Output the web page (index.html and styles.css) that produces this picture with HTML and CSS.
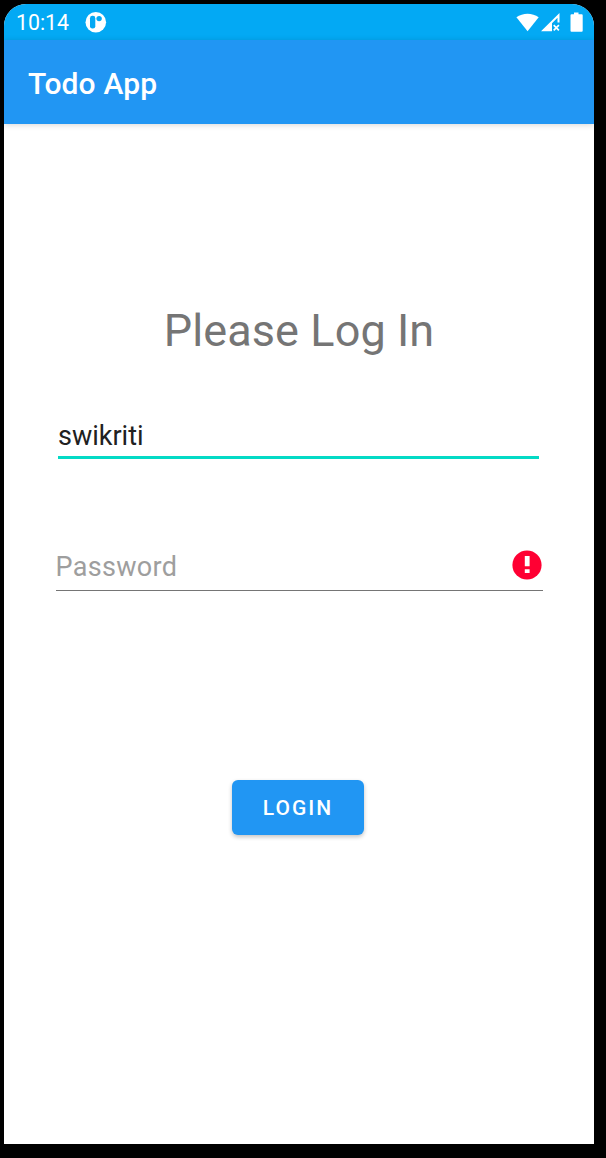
FILE: index.html
```html
<!DOCTYPE html>
<html lang="en">
<head>
<meta charset="utf-8">
<title>Todo App</title>
<link rel="stylesheet" href="styles.css">
</head>
<body>
<div class="screen">
  <div class="status-bar">
    <span class="clock">10:14</span>
    <svg class="notification" width="22" height="22" viewBox="0 0 22 22">
      <circle cx="10.800" cy="11.200" r="10.300" fill="#fff"/>
      <rect x="5" y="4.800" width="5.300" height="12.800" rx="2.400" fill="#03a9f4"/>
      <circle cx="14.100" cy="7.600" r="2.700" fill="#03a9f4"/>
    </svg>
    <svg class="system-icons" width="68" height="22" viewBox="0 0 68 22">
      <path fill="#fff" d="M.4 5.3C6.800.5 16.300.5 22.700 5.300L11.600 19.200Z"/>
      <path fill="#fff" fill-rule="evenodd" d="M25 19.200 43.500.9V10.500H41.500V5.800L36 11.300V19.200Z"/>
      <path fill="none" stroke="#fff" stroke-width="1.700" d="m37.700 13.200 5.200 5.200m0-5.200-5.200 5.200"/>
      <path fill="#fff" d="M58 .5h4.500v1.800h3.200q1 0 1 1v15.400q0 1-1 1H55.500q-1 0-1-1V3.300q0-1 1-1H58Z"/>
    </svg>
  </div>
  <header class="app-bar">Todo App</header>
  <main class="login">
    <h1 class="heading">Please Log In</h1>
    <div class="field field-active"><span class="value">swikriti</span></div>
    <div class="field field-error">
      <span class="hint">Password</span>
      <svg class="error-icon" width="30" height="30" viewBox="0 0 30 30">
        <circle cx="15" cy="15" r="14.600" fill="#ff0033"/>
        <path fill="#fff" d="M12.800 6h4.800v10.300h-4.800zM12.800 19.300h4.800v3.700h-4.800z"/>
      </svg>
    </div>
    <button class="login-button" type="button">LOGIN</button>
  </main>
</div>
</body>
</html>
```
FILE: styles.css
```css
* { box-sizing: border-box; }
body {
  margin: 0;
  padding: 4px 12px 14px 4px;
  height: 1158px;
  overflow: hidden;
  background: #000;
  font-family: Roboto, sans-serif;
}
.screen {
  height: 1140px;
  overflow: hidden;
  display: flex;
  flex-direction: column;
  background: #fff;
  border-radius: 22px 22px 0 0;
}
.status-bar {
  height: 36px;
  flex: none;
  display: flex;
  align-items: center;
  padding: 0 10px 0 12px;
  background: #03a9f4;
  color: #fff;
}
.clock { width: 69px; font-size: 21.3px; line-height: 36px; padding-top: 2px; }
.notification { display: block; }
.system-icons { display: block; margin: 2px 0 0 auto; }
.app-bar {
  height: 84px;
  flex: none;
  padding: 2px 24px 0;
  background: #2196f3;
  color: #fff;
  font-size: 30px;
  font-weight: 500;
  letter-spacing: .15px;
  line-height: 84px;
  box-shadow: 0 1px 6px rgba(0, 0, 0, .16);
}
.login {
  flex: 1;
  display: flex;
  flex-direction: column;
  align-items: center;
  padding-top: 177px;
}
.heading {
  margin: 0;
  color: #757575;
  font-size: 45px;
  font-weight: 400;
  letter-spacing: .1px;
  line-height: 60px;
}
.field { display: flex; font-size: 27px; line-height: 32px; }
.field-active {
  width: 481px;
  height: 39px;
  margin: 59px 1px 0 0;
  border-bottom: 3px solid #03dac5;
  color: #212121;
}
.field-error {
  width: 487px;
  height: 46px;
  margin-top: 86px;
  padding-top: 5px;
  justify-content: space-between;
  border-bottom: 1px solid #757575;
  color: #9e9e9e;
}
.hint { padding-top: 1px; letter-spacing: .3px; }
.error-icon { margin-right: 1px; }
.login-button {
  width: 132px;
  height: 55px;
  margin: 189px 2px 0 0;
  padding: 2px 0 0;
  border: 0;
  border-radius: 6px;
  background: #2196f3;
  color: #fff;
  font: 500 21px/53px Roboto, sans-serif;
  letter-spacing: 2px;
  box-shadow: 0 2px 4px rgba(0, 0, 0, .24);
}
```
